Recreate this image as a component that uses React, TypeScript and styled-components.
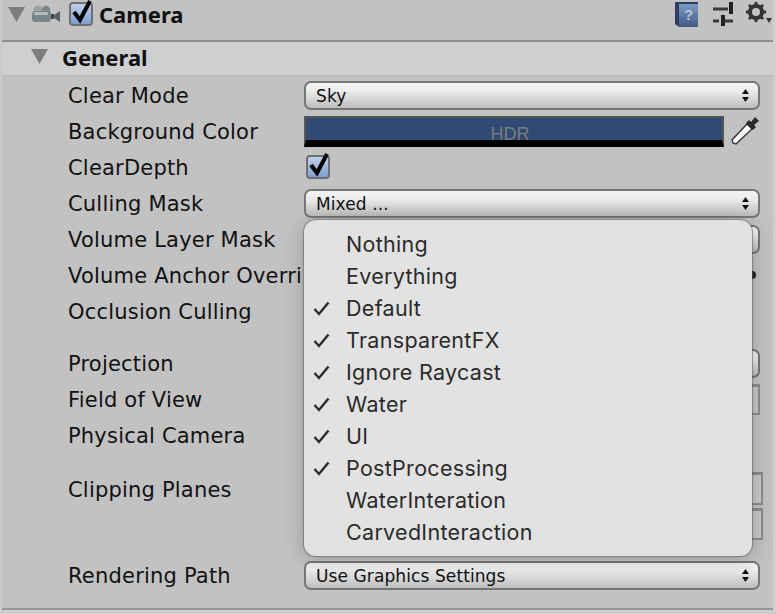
import styled, { createGlobalStyle } from "styled-components";

const GlobalStyle = createGlobalStyle`
  html, body {
    margin: 0;
    padding: 0;
    background: #c2c2c2;
  }
  body {
    font-family: "DejaVu Sans", "Liberation Sans", sans-serif;
    overflow: hidden;
  }
`;

const Inspector = styled.div`
  position: relative;
  width: 776px;
  height: 614px;
  overflow: hidden;
  background: #c2c2c2;
  border-left: 2px solid #cbcbcb;
  border-right: 3px solid #d0d0d0;
  box-sizing: border-box;
  color: #111;
`;

const Header = styled.div`
  height: 42px;
  padding: 0 1px 12px 6px;
  box-sizing: border-box;
  display: flex;
  align-items: center;
  border-bottom: 2px solid #8f8f8f;
`;

const HeaderTitle = styled.span`
  font-family: "Noto Sans", sans-serif;
  font-size: 22px;
  line-height: 26px;
  font-weight: 700;
  margin-left: 6px;
`;

const HeaderTools = styled.div`
  margin-left: auto;
  display: flex;
  align-items: center;
  gap: 13px;
`;

const SectionRow = styled.div`
  height: 34px;
  margin-left: -2px;
  margin-right: -3px;
  padding: 0 0 4px 31px;
  box-sizing: border-box;
  display: flex;
  align-items: center;
  gap: 14px;
  background: #cfcfcf;
  border-bottom: 1px solid #b9b9b9;
  font-family: "Noto Sans", sans-serif;
  font-size: 22px;
  font-weight: 700;
`;

const Fields = styled.div`
  padding-top: 1px;
`;

const Row = styled.div<{ $gap?: number; $height?: number; $top?: boolean }>`
  height: ${(p) => p.$height ?? 36}px;
  margin-top: ${(p) => p.$gap ?? 0}px;
  display: grid;
  grid-template-columns: 224px 1fr;
  column-gap: 12px;
  align-items: ${(p) => (p.$top ? "start" : "center")};
  padding: 0 13px 0 66px;
`;

const Label = styled.div`
  font-size: 21px;
  line-height: 34px;
  padding-top: 2px;
  white-space: nowrap;
  letter-spacing: 0.2px;
`;

const SelectBox = styled.div`
  height: 29px;
  box-sizing: border-box;
  border: 2px solid #767676;
  border-radius: 7px;
  padding: 1px 9px 0 10px;
  display: flex;
  align-items: center;
  justify-content: space-between;
  background: linear-gradient(#f3f3f3 0%, #ededed 30%, #bdbdbd 100%);
  font-size: 17px;
  letter-spacing: 0.1px;
`;

const ColorWrap = styled.div`
  display: flex;
  align-items: center;
  gap: 6px;
`;

const ColorField = styled.div`
  flex: 1;
  height: 31px;
  box-sizing: border-box;
  padding-right: 8px;
  border: 2px solid #555;
  background: #2f4a75;
  border-bottom: 7px solid #000;
  color: #7b7b7b;
  font-family: "Liberation Sans", sans-serif;
  font-size: 18px;
  line-height: 33px;
  text-align: center;
  overflow: hidden;
`;

const CheckBox = styled.div`
  width: 24px;
  height: 24px;
  margin-left: 2px;
  box-sizing: border-box;
  border: 2px solid #6f6f6f;
  border-radius: 4px;
  background: linear-gradient(#bcd0ea, #7ea0d2);
  display: flex;
  align-items: center;
  justify-content: center;
`;

const HeaderCheck = styled(CheckBox)`
  margin: 0 0 0 8px;
`;

const InputBox = styled.div<{ $wide?: boolean; $height?: number }>`
  height: ${(p) => p.$height ?? 31}px;
  margin-right: ${(p) => (p.$wide ? -3 : 0)}px;
  box-sizing: border-box;
  border: 2px solid #8d8d8d;
  border-top-width: 3px;
  background: #c9c9c9;
`;

const ClipStack = styled.div`
  display: flex;
  flex-direction: column;
  gap: 3px;
  padding-top: 1px;
`;

const ObjectPicker = styled.div`
  justify-self: end;
  width: 14px;
  height: 8px;
  margin-right: 4px;
  background: #222;
  border-radius: 0 4px 4px 0;
`;

const BottomLine = styled.div`
  position: absolute;
  left: -2px;
  right: -3px;
  top: 608px;
  height: 6px;
  background: #cdcdcd;
  border-top: 2px solid #979797;
  box-sizing: border-box;
`;

const Menu = styled.div`
  position: absolute;
  left: 302px;
  top: 220px;
  width: 448px;
  height: 336px;
  box-sizing: border-box;
  padding: 8px 0;
  border-radius: 12px;
  background: #e2e2e2;
  box-shadow: 0 0 1px 1px rgba(90, 90, 90, 0.55), 0 3px 22px rgba(0, 0, 0, 0.22);
  font-family: "Inter", "Liberation Sans", sans-serif;
  font-size: 21.5px;
  letter-spacing: 0.3px;
  color: #2b2b2b;
`;

const MenuItem = styled.div`
  height: 32px;
  display: flex;
  align-items: center;
  padding-left: 9px;
`;

const MenuMark = styled.span`
  width: 33px;
  display: flex;
  align-items: center;
`;

const Spacer = styled.span`
  width: 6px;
`;

function Triangle({ size = 17, color = "#7d7d7d" }: { size?: number; color?: string }) {
  return (
    <svg width={size} height={size - 2} viewBox="0 0 17 15">
      <path d="M0 0H17L8.5 15Z" fill={color} />
    </svg>
  );
}

function Tick() {
  return (
    <svg width="26" height="28" viewBox="0 0 26 28" style={{ margin: "-6px -3px 0 -1px", flexShrink: 0 }}>
      <path d="M5 15L11 23L21 4" fill="none" stroke="#000" strokeWidth="4" />
    </svg>
  );
}

function MenuTick() {
  return (
    <svg width="17" height="15" viewBox="0 0 17 15">
      <path d="M1.5 8L6 13L15.5 1.5" fill="none" stroke="#2b2b2b" strokeWidth="2.4" />
    </svg>
  );
}

function Stepper() {
  return (
    <svg width="7" height="13" viewBox="0 0 7 13">
      <path d="M3.5 0L7 5H0Z M0 8H7L3.5 13Z" fill="#111" />
    </svg>
  );
}

function CameraIcon() {
  return (
    <svg width="30" height="18" viewBox="0 0 30 18">
      <circle cx="7" cy="5" r="4.6" fill="#98a2a6" />
      <circle cx="15" cy="5" r="4.2" fill="#7a858a" />
      <rect x="1" y="6" width="19" height="11" rx="3" fill="#79858a" />
      <rect x="3" y="7" width="14" height="3" rx="1" fill="#afb8bb" />
      <rect x="20" y="9" width="3" height="5" fill="#3f474c" />
      <path d="M23 10L29 6V17L23 13Z" fill="#566066" />
    </svg>
  );
}

function HelpBook() {
  return (
    <svg width="26" height="28" viewBox="0 0 26 28">
      <path d="M1 2H24V27H5L1 24Z" fill="#2b3f5e" />
      <path d="M5 4H24V27H5Z" fill="url(#bookFill)" />
      <defs>
        <linearGradient id="bookFill" x1="0" y1="0" x2="0" y2="1">
          <stop offset="0" stopColor="#7c9bc2" />
          <stop offset="1" stopColor="#3f5a86" />
        </linearGradient>
      </defs>
      <text x="14.5" y="20" fontSize="15" fontFamily="Liberation Sans" fontWeight="700" textAnchor="middle" fill="#b9c6d8">?</text>
    </svg>
  );
}

function SlidersIcon() {
  return (
    <svg width="20" height="26" viewBox="0 0 20 26">
      <path d="M0 8H15M0 20H6M12 20H20" stroke="#3a3a3a" strokeWidth="3" />
      <rect x="16" y="1" width="4" height="12" fill="#222" />
      <rect x="8" y="14" width="4" height="11" fill="#222" />
    </svg>
  );
}

function GearIcon() {
  return (
    <svg width="26" height="26" viewBox="0 0 26 26">
      <circle cx="10" cy="11" r="6" fill="none" stroke="#333" strokeWidth="4" />
      <path
        d="M10 1V5M10 17V21M0 11H4M16 11H20M3 4L6 7M14 15L17 18M17 4L14 7M6 15L3 18"
        stroke="#333"
        strokeWidth="3"
      />
      <path d="M20 17H26L23 22Z" fill="#333" />
    </svg>
  );
}

function Eyedropper() {
  return (
    <svg width="30" height="30" viewBox="0 0 30 30">
      <path d="M3 27L2 24L17 8L22 13L6 28Z" fill="#fff" stroke="#333" strokeWidth="1.4" />
      <path d="M16 7L19 4L21 6L25 1L29 5L24 9L26 11L23 14Z" fill="#2a2a2a" />
    </svg>
  );
}

const layers = [
  { name: "Nothing", on: false },
  { name: "Everything", on: false },
  { name: "Default", on: true },
  { name: "TransparentFX", on: true },
  { name: "Ignore Raycast", on: true },
  { name: "Water", on: true },
  { name: "UI", on: true },
  { name: "PostProcessing", on: true },
  { name: "WaterInteration", on: false },
  { name: "CarvedInteraction", on: false },
];

function App() {
  return (
    <>
      <GlobalStyle />
      <Inspector>
        <Header>
          <Triangle />
          <Spacer />
          <CameraIcon />
          <HeaderCheck>
            <Tick />
          </HeaderCheck>
          <HeaderTitle>Camera</HeaderTitle>
          <HeaderTools>
            <HelpBook />
            <SlidersIcon />
            <GearIcon />
          </HeaderTools>
        </Header>
        <SectionRow>
          <Triangle />
          General
        </SectionRow>
        <Fields>
          <Row>
            <Label>Clear Mode</Label>
            <SelectBox>
              Sky
              <Stepper />
            </SelectBox>
          </Row>
          <Row>
            <Label>Background Color</Label>
            <ColorWrap>
              <ColorField>HDR</ColorField>
              <Eyedropper />
            </ColorWrap>
          </Row>
          <Row>
            <Label>ClearDepth</Label>
            <CheckBox>
              <Tick />
            </CheckBox>
          </Row>
          <Row>
            <Label>Culling Mask</Label>
            <SelectBox>
              Mixed ...
              <Stepper />
            </SelectBox>
          </Row>
          <Row>
            <Label>Volume Layer Mask</Label>
            <SelectBox />
          </Row>
          <Row>
            <Label>Volume Anchor Overri</Label>
            <ObjectPicker />
          </Row>
          <Row>
            <Label>Occlusion Culling</Label>
          </Row>
          <Row $gap={16}>
            <Label>Projection</Label>
            <SelectBox />
          </Row>
          <Row>
            <Label>Field of View</Label>
            <InputBox />
          </Row>
          <Row>
            <Label>Physical Camera</Label>
          </Row>
          <Row $gap={18} $height={70} $top>
            <Label>Clipping Planes</Label>
            <ClipStack>
              <InputBox $wide $height={33} />
              <InputBox $wide $height={32} />
            </ClipStack>
          </Row>
          <Row $gap={16}>
            <Label>Rendering Path</Label>
            <SelectBox>
              Use Graphics Settings
              <Stepper />
            </SelectBox>
          </Row>
        </Fields>
        <BottomLine />
        <Menu>
          {layers.map((layer) => (
            <MenuItem key={layer.name}>
              <MenuMark>{layer.on && <MenuTick />}</MenuMark>
              {layer.name}
            </MenuItem>
          ))}
        </Menu>
      </Inspector>
    </>
  );
}

export default App;
